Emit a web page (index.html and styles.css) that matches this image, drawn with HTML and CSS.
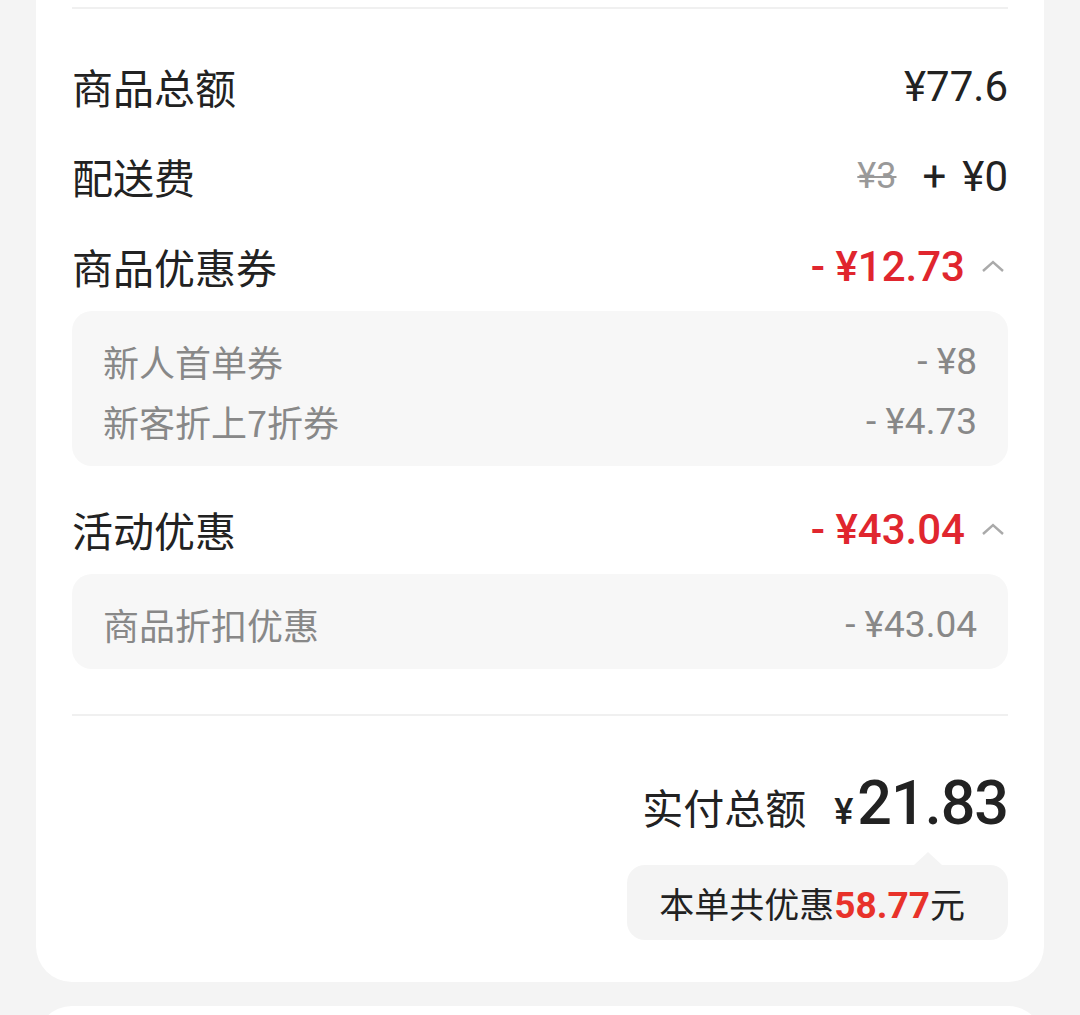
FILE: index.html
```html
<!DOCTYPE html>
<html lang="zh-CN">
<head>
  <meta charset="UTF-8">
  <title>订单金额明细</title>
  <link rel="stylesheet" href="styles.css">
</head>
<body>
  <div class="card">
    <div class="rule"></div>

    <div class="rows">
      <div class="row">
        <span class="label">商品总额</span>
        <span class="value">¥77.6</span>
      </div>
      <div class="row">
        <span class="label">配送费</span>
        <span class="value"><s class="old">¥3</s><span class="plus">+</span>¥0</span>
      </div>
      <div class="row">
        <span class="label">商品优惠券</span>
        <span class="value red">- ¥12.73
          <svg class="chev" viewBox="0 0 24 14"><path d="M2 12 L12 3 L22 12"/></svg>
        </span>
      </div>
      <div class="detail">
        <div class="drow"><span>新人首单券</span><span class="num">- ¥8</span></div>
        <div class="drow"><span>新客折上7折券</span><span class="num">- ¥4.73</span></div>
      </div>
      <div class="row gap">
        <span class="label">活动优惠</span>
        <span class="value red">- ¥43.04
          <svg class="chev" viewBox="0 0 24 14"><path d="M2 12 L12 3 L22 12"/></svg>
        </span>
      </div>
      <div class="detail">
        <div class="drow"><span>商品折扣优惠</span><span class="num">- ¥43.04</span></div>
      </div>
    </div>

    <div class="rule"></div>

    <div class="total">
      <div class="total-line">
        <span class="total-label">实付总额</span>
        <span class="yen">¥</span><span class="big">21.83</span>
      </div>
      <div class="bubble">本单共优惠<b>58.77</b>元</div>
    </div>
  </div>

  <div class="card next"></div>
</body>
</html>
```

FILE: styles.css
```css
body { margin: 0; background: #f4f4f4; font-family: Roboto, "Noto Sans CJK SC", sans-serif; color: #222; }

.card { margin: 0 36px; background: #fff; border-radius: 0 0 36px 36px; padding: 7px 36px 42px; }
.card.next { margin-top: 24px; border-radius: 36px 36px 0 0; height: 40px; padding: 0; }

.rule { height: 2px; background: #f0f0f0; }

.rows { padding-top: 32px; padding-bottom: 45px; }
.row { display: flex; justify-content: space-between; align-items: center; height: 90px; }
.row.gap { margin-top: 18px; }
.label { font-size: 41px; font-family: "Noto Sans CJK SC", sans-serif; }
.value { font-size: 42px; display: flex; align-items: center; }
.value.red { color: #e0262e; font-weight: 500; }
.old { color: #999; font-size: 36px; margin-right: 26px; text-decoration-thickness: 2px; }
.plus { margin-right: 16px; }
.chev { width: 24px; height: 14px; margin-left: 16px; margin-right: 3px; fill: none; stroke: #aaa; stroke-width: 2.4; }

.detail { background: #f7f7f7; border-radius: 20px; padding: 20px 31px 15px 31px; color: #888; }
.drow { display: flex; justify-content: space-between; align-items: center; height: 60px; font-size: 36px; }
.drow span:first-child { font-family: "Noto Sans CJK SC", sans-serif; }
.drow .num { font-size: 37px; }

.total { display: flex; flex-direction: column; align-items: flex-end; padding-top: 47px; }
.total-line { display: flex; align-items: baseline; }
.total-label { font-size: 41px; font-family: "Noto Sans CJK SC", sans-serif; margin-right: 28px; }
.yen { font-size: 36px; font-weight: 500; margin-right: 4px; }
.big { font-size: 61px; font-weight: 500; line-height: 80px; letter-spacing: -1px; }

.bubble { position: relative; margin-top: 22px; background: #f4f4f4; border-radius: 18px; padding: 0 43px 0 32px; height: 75px; line-height: 75px; font-size: 35px; font-family: "Noto Sans CJK SC", sans-serif; }
.bubble::before { content: ""; position: absolute; top: -13px; right: 66px; border: 14px solid transparent; border-top: 0; border-bottom: 13px solid #f4f4f4; }
.bubble b { color: #e8322a; font-family: Roboto, sans-serif; font-weight: 700; font-size: 37px; }
```
